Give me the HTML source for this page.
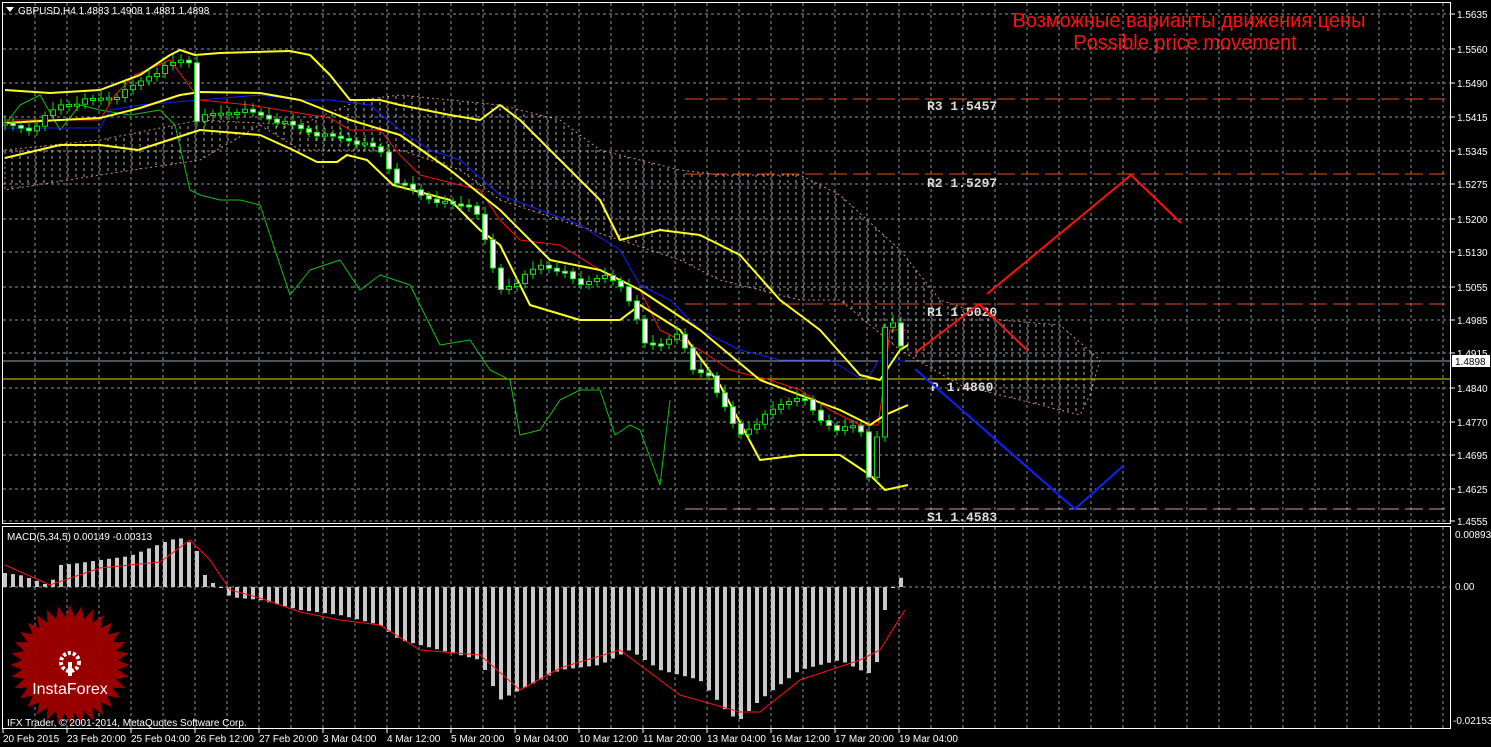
<!DOCTYPE html>
<html><head><meta charset="utf-8"><style>
html,body{margin:0;padding:0;background:#000;width:1491px;height:747px;overflow:hidden}
svg{display:block}
text{font-family:"Liberation Sans",sans-serif}
.ax{fill:#fff;font-size:10px}
.pv{fill:#ddd;font-family:"Liberation Mono",monospace;font-weight:bold;font-size:13px}
</style></head><body>
<svg id="s" width="1491" height="747" xmlns="http://www.w3.org/2000/svg">
<defs>
<pattern id="hatch" width="8" height="6" patternUnits="userSpaceOnUse"><line x1="4" y1="0" x2="4" y2="3" stroke="#ccc" stroke-width="1"/></pattern>
</defs>
<rect width="1491" height="747" fill="#000"/>
<g id="grid" stroke="#8a93a0" stroke-dasharray="3,3" stroke-width="1"></g>
<path d="M5,150 L100,140 L200,120 L300,125 L360,100 L400,95 L500,105 L560,120 L600,150 L680,170 L720,175 L800,175 L840,195 L900,250 L940,300 L1000,320 L1060,325 L1100,360 L1090,395 L1080,415 L1000,395 L960,385 L900,350 L840,300 L800,300 L720,280 L680,260 L620,240 L560,220 L500,200 L460,170 L400,150 L300,150 L260,125 L200,160 L100,175 L5,190 Z" fill="url(#hatch)" stroke="#f4a880" stroke-dasharray="2,3" stroke-width="1" opacity="0.85"/>
<line x1="685" y1="99" x2="1445" y2="99" stroke="#e05020" stroke-dasharray="18,6"/>
<line x1="685" y1="174" x2="1445" y2="174" stroke="#e05020" stroke-dasharray="18,6"/>
<line x1="685" y1="304" x2="1445" y2="304" stroke="#e05020" stroke-dasharray="18,6"/>
<line x1="685" y1="509" x2="1445" y2="509" stroke="#c8a0a0" stroke-dasharray="18,6"/>
<line x1="2" y1="361" x2="1451" y2="361" stroke="#9aa4b0"/>
<line x1="2" y1="379" x2="1451" y2="379" stroke="#e8d000"/>
<g id="ind" fill="none"></g>
<g id="candles"></g>
<text class="pv" x="927" y="110">R3 1.5457</text>
<text class="pv" x="927" y="187">R2 1.5297</text>
<text class="pv" x="927" y="316">R1 1.5020</text>
<text class="pv" x="931" y="391">P 1.4860</text>
<text class="pv" x="927" y="521">S1 1.4583</text>
<polyline points="915,353 979,304 1027,350" fill="none" stroke="#ff1010" stroke-width="2"/>
<polyline points="987,294 1131,175 1181,223" fill="none" stroke="#ff1010" stroke-width="2"/>
<polyline points="915,369 1075,509 1123,466" fill="none" stroke="#1020ff" stroke-width="2"/>
<text x="1189" y="27" fill="#ff1010" font-size="20" text-anchor="middle">Возможные варианты движения цены</text>
<text x="1185" y="49" fill="#ff1010" font-size="20" text-anchor="middle">Possible price movement</text>
<rect x="2.5" y="2.5" width="1448" height="521" fill="none" stroke="#fff"/>
<rect x="2.5" y="526.5" width="1448" height="202" fill="none" stroke="#fff"/>
<path d="M6,7 L14,7 L10,12 Z" fill="#fff"/>
<text class="ax" x="18" y="14">GBPUSD,H4  1.4883 1.4908 1.4881 1.4898</text>
<text class="ax" x="7" y="540">MACD(5,34,5) 0.00149 -0.00313</text>
<g id="macd"></g>
<g id="logo"></g>
<text x="70" y="694" fill="#fff" font-size="16" text-anchor="middle">InstaForex</text>
<text class="ax" x="7" y="726">IFX Trader, © 2001-2014, MetaQuotes Software Corp.</text>
<g id="axis"></g>
<rect x="1452" y="355" width="38" height="12" fill="#fff"/>
<text x="1455" y="365" font-size="10" fill="#000">1.4898</text>
</svg>
<script>
(function(){
var NS="http://www.w3.org/2000/svg";
function el(p,t,a,txt){var e=document.createElementNS(NS,t);for(var k in a)e.setAttribute(k,a[k]);if(txt)e.textContent=txt;document.getElementById(p).appendChild(e);return e;}
function interp(pts,x){for(var i=0;i<pts.length-1;i++){if(x<=pts[i+1][0]){var a=pts[i],b=pts[i+1];return a[1]+(b[1]-a[1])*(x-a[0])/(b[0]-a[0]);}}return pts[pts.length-1][1];}
function P(a){var r=[];for(var i=0;i<a.length;i+=2)r.push([a[i],a[i+1]]);return r;}
var x;
for(x=35;x<1451;x+=32)el('grid','line',{x1:x,y1:3,x2:x,y2:523});
for(x=35;x<1451;x+=32)el('grid','line',{x1:x,y1:527,x2:x,y2:728});
var gy=[14,49,83,117,151,184,219,252,287,320,353,388,422,455,489,521];
var gl=["1.5635","1.5560","1.5490","1.5415","1.5345","1.5275","1.5200","1.5130","1.5055","1.4985","1.4915","1.4840","1.4770","1.4695","1.4625","1.4555"];
gy.forEach(function(y,i){el('grid','line',{x1:3,y1:y,x2:1450,y2:y});el('axis','line',{x1:1451,y1:y,x2:1455,y2:y,stroke:'#fff'});el('axis','text',{x:1457,y:y+4,'class':'ax'},gl[i]);});
el('grid','line',{x1:3,y1:587,x2:1450,y2:587});
el('axis','text',{x:1455,y:538,'class':'ax'},"0.00893");
el('axis','text',{x:1455,y:590,'class':'ax'},"0.00");
el('axis','text',{x:1453,y:724,'class':'ax'},"-0.02153");
var dl=["20 Feb 2015","23 Feb 20:00","25 Feb 04:00","26 Feb 12:00","27 Feb 20:00","3 Mar 04:00","4 Mar 12:00","5 Mar 20:00","9 Mar 04:00","10 Mar 12:00","11 Mar 20:00","13 Mar 04:00","16 Mar 12:00","17 Mar 20:00","19 Mar 04:00"];
dl.forEach(function(t,i){var xx=3+64*i;el('axis','line',{x1:xx,y1:729,x2:xx,y2:733,stroke:'#fff'});el('axis','text',{x:xx,y:742,'class':'ax'},t);});
function line(pts,c,w){el('ind','polyline',{points:pts.map(function(p){return p.join(',')}).join(' '),stroke:c,'stroke-width':w,fill:'none','stroke-linejoin':'round'});}
line(P([5,125,20,105,40,95,60,130,80,105,100,110,130,115,160,110,175,125,190,190,200,195,220,200,240,200,260,205,275,250,290,295,310,270,340,260,360,290,380,275,410,285,440,345,470,340,490,370,510,380,520,435,540,430,560,400,580,390,600,390,615,435,630,425,640,430,660,485,670,400]),'#10c010',1);
line(P([5,128,100,128,110,110,140,105,260,95,300,100,330,100,370,105,400,130,430,150,460,160,500,195,540,210,580,225,620,250,640,285,670,300,700,330,740,350,780,360,830,360,860,378,870,375,878,361,905,361]),'#1020ff',1);
line(P([5,120,100,120,115,95,135,75,170,60,200,100,250,105,330,118,350,130,380,130,400,155,420,175,480,190,500,220,520,240,560,245,600,270,640,290,660,330,700,350,730,370,770,380,800,390,830,410,860,425,878,425,883,390,890,330,905,330]),'#ff1010',1);
line(P([5,90,50,93,100,90,140,75,170,55,180,50,195,55,220,53,290,51,310,55,330,75,350,100,380,100,400,105,450,115,480,120,500,105,520,120,560,160,600,200,620,240,660,230,700,235,740,255,780,300,820,330,860,375,880,380,900,350,908,345]),'#ffff20',2);
line(P([5,123,60,120,100,118,140,108,180,95,200,92,260,93,300,100,350,120,400,135,450,170,500,210,550,260,600,270,640,290,700,330,730,355,760,380,800,395,840,410,870,425,885,415,908,405]),'#ffff20',2);
line(P([5,158,60,145,100,145,138,150,200,130,260,135,293,150,317,162,337,162,347,155,367,160,393,185,450,200,480,230,500,245,530,305,580,320,620,320,640,305,680,330,720,385,760,460,800,455,840,455,870,475,885,490,908,485]),'#ffff20',2);
var cp=P([5,125,30,130,60,105,90,100,120,95,150,75,180,60,190,62,195,120,210,115,240,110,260,115,290,125,320,135,350,140,380,150,395,180,420,195,450,205,475,205,490,260,500,290,520,280,540,265,560,270,580,285,600,275,620,285,635,310,645,345,660,345,680,330,690,370,710,375,730,420,740,435,760,420,780,405,800,395,820,420,840,430,860,425,868,480,876,450,884,330,896,322,905,365]);
var prev=interp(cp,5);
for(x=5;x<=905;x+=8){var c=interp(cp,x)+((x*7)%5-2);var o=prev;prev=c;var t1=Math.min(o,c),b1=Math.max(o,c);if(b1-t1<2)b1=t1+2;
el('candles','line',{x1:x,y1:t1-4-(x%3)*2,x2:x,y2:b1+4+(x%4),stroke:'#10e010'});
el('candles','rect',{x:x-2.5,y:t1,width:5,height:b1-t1,fill:(c>o?'#fff':'#000'),stroke:'#10e010','stroke-width':1});}
var mh=P([5,573,20,575,35,580,50,586,60,565,80,563,100,560,130,556,150,548,170,540,180,538,195,545,205,575,215,585,225,590,230,597,260,600,300,610,340,615,380,625,400,640,440,650,480,660,500,700,520,690,560,670,600,665,630,650,660,670,700,680,730,715,740,720,760,700,800,670,840,660,860,670,875,675,885,610,893,587,900,578,908,576]);
for(x=5;x<=908;x+=8){var yy=interp(mh,x);el('macd','rect',{x:x-2,y:Math.min(yy,587),width:4,height:Math.max(1,Math.abs(yy-587)),fill:'#c8c8c8'});}
el('macd','polyline',{points:"5,565 50,585 100,568 160,562 190,540 210,560 230,590 260,598 300,612 340,620 380,625 420,650 480,655 520,690 560,668 620,650 680,695 740,712 760,712 800,680 860,660 880,650 905,610",fill:'none',stroke:'#ff1010','stroke-width':1});
var pts=[],cx=70,cy=665;for(var i=0;i<64;i++){var r=i%2?48:60,a=i*Math.PI/32;pts.push((cx+r*Math.cos(a)).toFixed(1)+','+(cy+r*Math.sin(a)).toFixed(1));}
el('logo','polygon',{points:pts.join(' '),fill:'#a00000',opacity:'0.95'});
el('logo','circle',{cx:70,cy:662,r:9,fill:'none',stroke:'#fff','stroke-width':4,'stroke-dasharray':'3,2'});
el('logo','rect',{x:68,y:662,width:4,height:14,fill:'#fff'});
})();
</script>
</body></html>
